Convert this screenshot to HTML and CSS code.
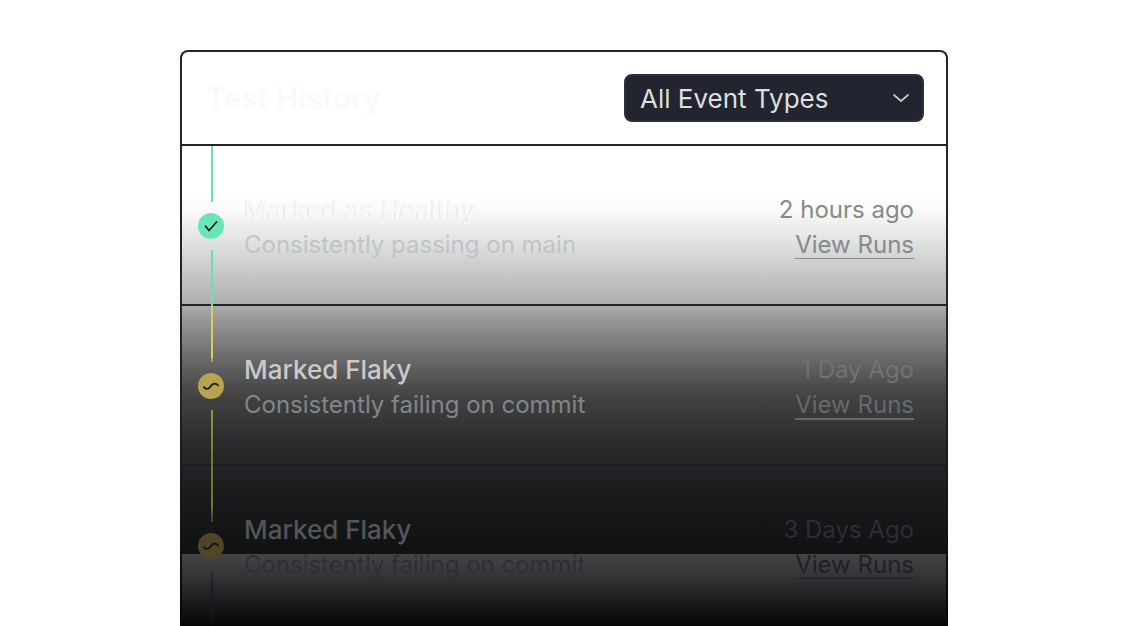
FILE: index.html
```html
<!DOCTYPE html>
<html lang="en">
<head>
<meta charset="UTF-8">
<meta name="viewport" content="width=device-width, initial-scale=1.0">
<title>Test History</title>
<link rel="stylesheet" href="styles.css">
</head>
<body>

<section class="card">
  <header class="card-header">
    <h1>Test History</h1>
    <div class="select-wrap">
      <select class="event-select" aria-label="Event type">
        <option>All Event Types</option>
        <option>Marked Flaky</option>
        <option>Marked as Healthy</option>
      </select>
      <svg class="chevron" viewBox="0 0 20 12" fill="none" stroke="#c4c6c8" stroke-width="1.800" stroke-linecap="round" stroke-linejoin="round">
        <path d="M3 3L10 9L17 3"/>
      </svg>
    </div>
  </header>

  <ul class="events">
    <li class="event healthy">
      <div class="timeline">
        <span class="line"></span>
        <svg class="dot" viewBox="0 0 26 26" fill="none">
          <circle cx="13" cy="13" r="13" fill="#69e6b8"/>
          <path d="M7 12.500L11 17.500L19 8.500" stroke="#14161a" stroke-width="1.700"/>
        </svg>
        <span class="line"></span>
      </div>
      <div class="details">
        <h2>Marked as Healthy</h2>
        <p>Consistently passing on main</p>
      </div>
      <div class="meta">
        <time>2 hours ago</time>
        <a href="#">View Runs</a>
      </div>
    </li>

    <li class="event flaky">
      <div class="timeline">
        <span class="line"></span>
        <svg class="dot" viewBox="0 0 26 26" fill="none">
          <circle cx="13" cy="13" r="13" fill="#b9a34c"/>
          <path d="M5.500 13.500C7 16.500 10.500 17 12.500 13.500C14.500 10 18.500 9.500 20.500 13" stroke="#14161a" stroke-width="1.700"/>
        </svg>
        <span class="line"></span>
      </div>
      <div class="details">
        <h2>Marked Flaky</h2>
        <p>Consistently failing on commit</p>
      </div>
      <div class="meta">
        <time>1 Day Ago</time>
        <a href="#">View Runs</a>
      </div>
    </li>

    <li class="event faded">
      <div class="timeline">
        <span class="line"></span>
        <svg class="dot" viewBox="0 0 26 26" fill="none">
          <circle cx="13" cy="13" r="13" fill="#504526"/>
          <path d="M5.500 13.500C7 16.500 10.500 17 12.500 13.500C14.500 10 18.500 9.500 20.500 13" stroke="#101216" stroke-width="1.700"/>
        </svg>
        <span class="line"></span>
      </div>
      <div class="details">
        <h2>Marked Flaky</h2>
        <p>Consistently failing on commit</p>
      </div>
      <div class="meta">
        <time>3 Days Ago</time>
        <a href="#">View Runs</a>
      </div>
    </li>
  </ul>
</section>

</body>
</html>
```

FILE: styles.css
```css
* {
  margin: 0;
  padding: 0;
  box-sizing: border-box;
  font-family: 'Inter', sans-serif;
}

body {
  background: #ffffff;
  height: 100vh;
  padding: 50px 178px 0 180px;
  overflow: hidden;
}

.card {
  border: 2px solid transparent;
  border-bottom: none;
  border-radius: 8px 8px 0 0;
  background:
    linear-gradient(#ffffff, #ffffff) padding-box,
    linear-gradient(#22242f 0, #22242f 260px, #181a22 420px, #08080a 560px) border-box;
}

.card-header {
  display: flex;
  align-items: center;
  justify-content: space-between;
  padding: 22px 22px 22px 24px;
  border-bottom: 2px solid #22242f;
}

.card-header h1 {
  font-size: 30px;
  font-weight: 600;
  line-height: 36px;
  color: #fafafa;
}

.select-wrap {
  position: relative;
  width: 300px;
}

.event-select {
  display: block;
  width: 100%;
  height: 48px;
  padding: 0 48px 0 14px;
  appearance: none;
  background: #22242f;
  border: 2px solid #2c3038;
  border-radius: 8px;
  color: #dcdedf;
  font-size: 26px;
}

.chevron {
  position: absolute;
  right: 13px;
  top: 18px;
  width: 20px;
  height: 12px;
  pointer-events: none;
}

.events {
  list-style: none;
  background: linear-gradient(
    #ffffff 0, #ffffff 50px, #fafafa 64px, #eeeeee 80px, #dedfdf 99px,
    #cacbcb 122px, #b0b0b0 156px, #979798 174px, #808080 194px, #686869 214px,
    #525253 234px, #404041 254px, #363738 274px, #2b2c2d 294px, #222425 318px,
    #17191b 354px, #101113 408px, #444446 408px, #353637 428px, #232426 446px,
    #151618 462px, #060607 480px
  );
}

.event {
  display: flex;
  height: 160px;
  padding: 0 32px 0 16px;
  border-bottom: 2px solid #22242f;
}

.timeline {
  display: flex;
  flex-direction: column;
  align-items: center;
  justify-content: space-between;
  width: 28px;
  height: 160px;
  margin-right: 18px;
}

.line {
  width: 2px;
  height: 56px;
  background: #69e0b4;
}

.dot {
  width: 26px;
  height: 26px;
  align-self: flex-start;
}

.details {
  flex: 1;
  padding-top: 46px;
}

.details h2 {
  font-size: 26px;
  font-weight: 500;
  line-height: 36px;
}

.details p {
  font-size: 24px;
  line-height: 34px;
}

.meta {
  display: flex;
  flex-direction: column;
  align-items: flex-end;
  padding-top: 46px;
  font-size: 24px;
  color: #87898b;
}

.meta time {
  line-height: 36px;
}

.meta a {
  margin-top: 4px;
  line-height: 26px;
  color: inherit;
  text-decoration: none;
  border-bottom: 1px solid currentColor;
}

.healthy h2 {
  color: #f8f8f8;
  text-shadow: -1px 0 rgba(0, 0, 0, 0.1);
}

.healthy p {
  color: #c1c4c7;
}

.flaky {
  border-bottom-color: #191a24;
}

.flaky .line {
  background: linear-gradient(#e0c85f 0, #e0c85f 52px, #b09a48 53px);
}

.flaky .line:last-child {
  background: linear-gradient(#a38f45, #7d6e34);
}

.flaky h2 {
  color: #c8cacc;
}

.flaky p {
  color: #84868a;
}

.flaky time {
  color: #707274;
}

.flaky a {
  color: #66696b;
  border-bottom-width: 2px;
}

.faded {
  border-bottom: none;
}

.faded .line {
  background: linear-gradient(#7d6e34 0, #7d6e34 42px, #4d4328 50px);
}

.faded .line:last-child {
  background: linear-gradient(#343435, #1c1d26 12px, #15161c 42px, #0b0b0d);
}

.faded h2 {
  color: #545558;
}

.faded p {
  color: #2d2f35;
}

.faded time {
  color: #2c2d36;
}

.faded a {
  color: #1f202a;
}
```
